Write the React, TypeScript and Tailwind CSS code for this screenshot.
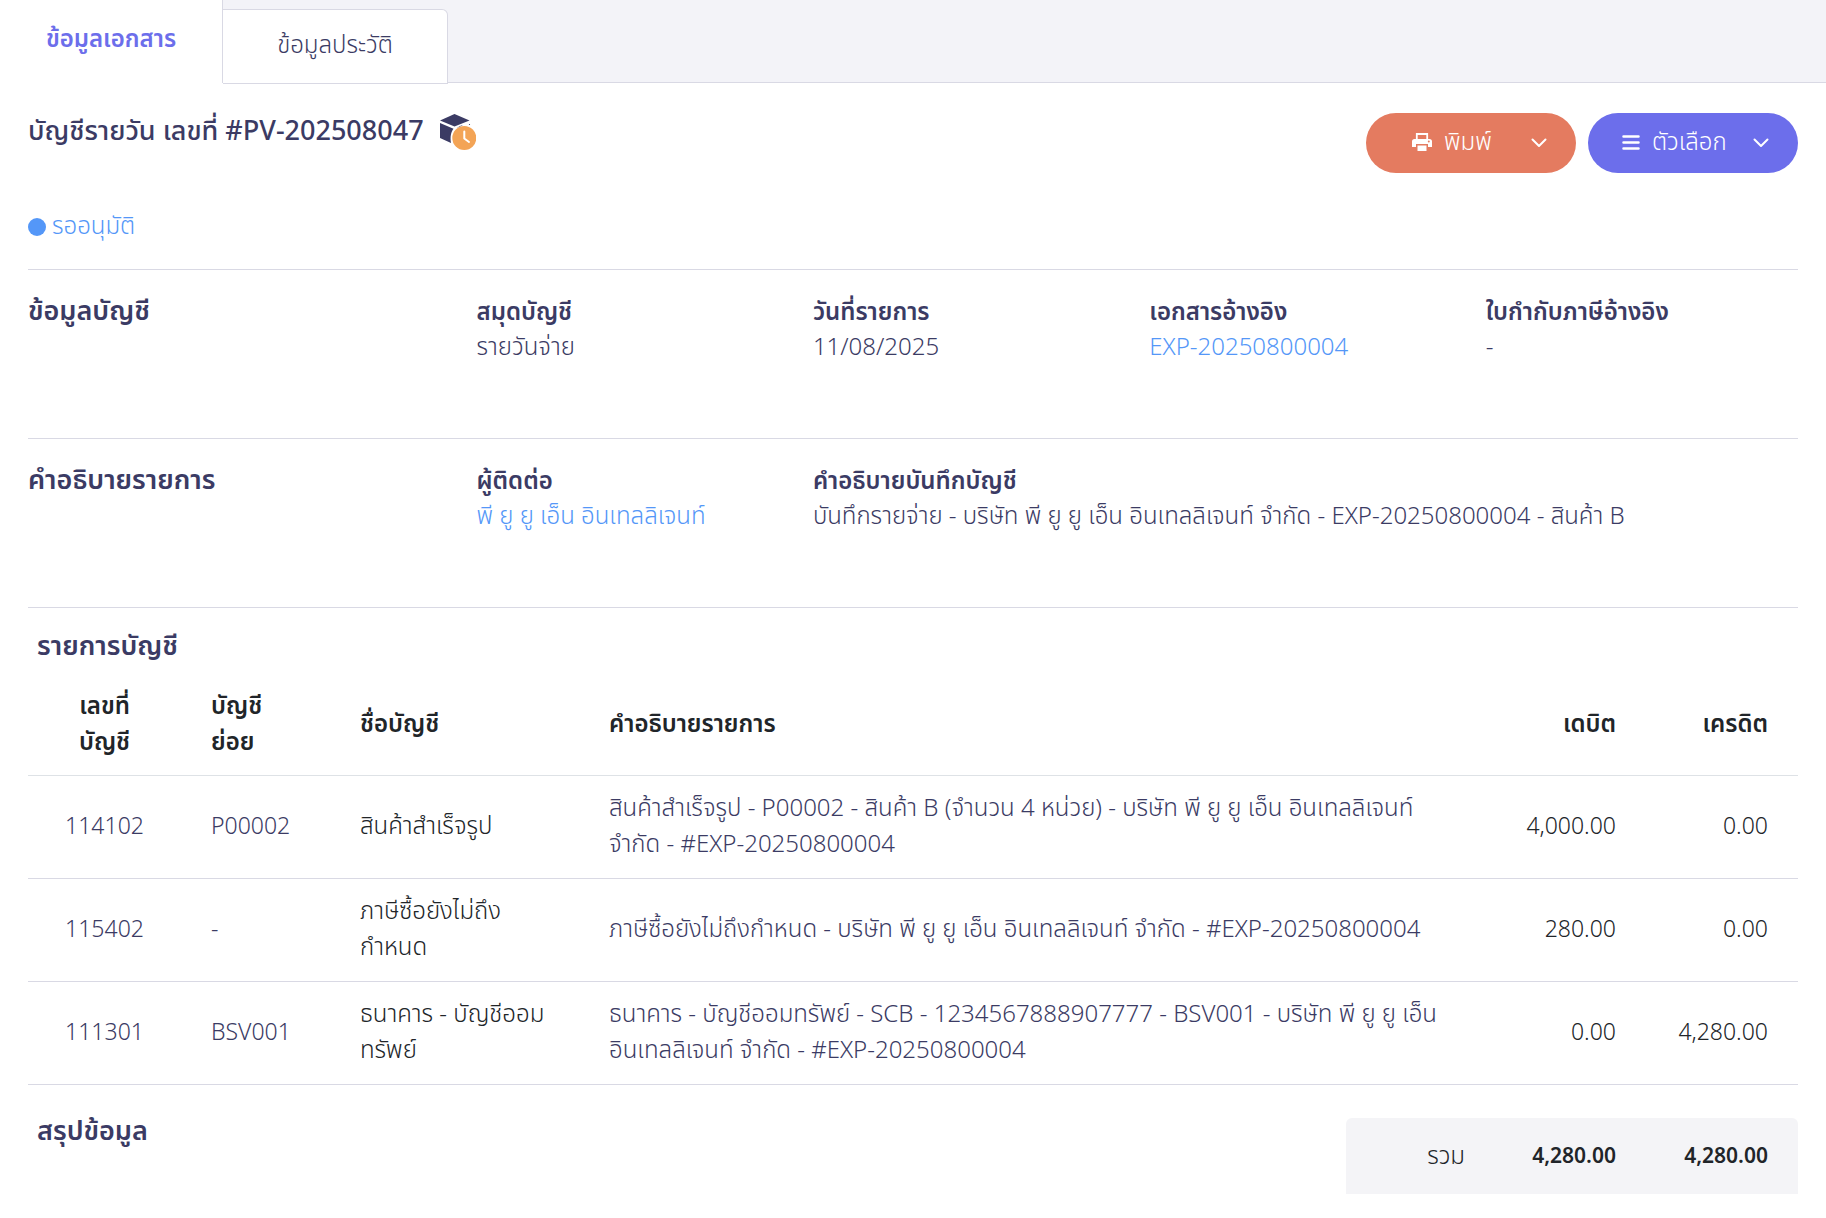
import React, { useState } from "react";

/** ================= Types ================= */
type TabKey = "document" | "history";

type Entry = {
  code: string;
  sub: string;
  name: string[];
  description: string[];
  debit: string;
  credit: string;
};

/** ================= Data ================= */
const TABS: { key: TabKey; label: string }[] = [
  { key: "document", label: "ข้อมูลเอกสาร" },
  { key: "history", label: "ข้อมูลประวัติ" },
];

const ENTRIES: Entry[] = [
  {
    code: "114102",
    sub: "P00002",
    name: ["สินค้าสำเร็จรูป"],
    description: [
      "สินค้าสำเร็จรูป - P00002 - สินค้า B (จำนวน 4 หน่วย) - บริษัท พี ยู ยู เอ็น อินเทลลิเจนท์",
      "จำกัด - #EXP-20250800004",
    ],
    debit: "4,000.00",
    credit: "0.00",
  },
  {
    code: "115402",
    sub: "-",
    name: ["ภาษีซื้อยังไม่ถึง", "กำหนด"],
    description: ["ภาษีซื้อยังไม่ถึงกำหนด - บริษัท พี ยู ยู เอ็น อินเทลลิเจนท์ จำกัด - #EXP-20250800004"],
    debit: "280.00",
    credit: "0.00",
  },
  {
    code: "111301",
    sub: "BSV001",
    name: ["ธนาคาร - บัญชีออม", "ทรัพย์"],
    description: [
      "ธนาคาร - บัญชีออมทรัพย์ - SCB - 1234567888907777 - BSV001 - บริษัท พี ยู ยู เอ็น",
      "อินเทลลิเจนท์ จำกัด - #EXP-20250800004",
    ],
    debit: "0.00",
    credit: "4,280.00",
  },
];

/** ================= Small UI Bits ================= */
const Lines: React.FC<{ items: string[] }> = ({ items }) => (
  <>
    {items.map((line) => (
      <span key={line} className="block whitespace-nowrap">
        {line}
      </span>
    ))}
  </>
);

const BoxClockIcon = () => (
  <svg className="h-9 w-9 shrink-0" viewBox="0 0 36 36" fill="none" aria-hidden="true">
    <path d="M0 6.5 14.5 0 29.500 6.5 14.5 12.500Z" fill="#3b3b64" />
    <path d="M0 9 13.500 14.7C11 18 10 22.5 11 29L0 24Z" fill="#3b3b64" />
    <path d="M16.5 14.3 23 11.200C20.500 11.400 18.500 12.500 16.500 14.300Z" fill="#3b3b64" />
    <circle cx="29.500" cy="10.500" r="0.600" fill="#3b3b64" />
    <circle cx="24.300" cy="24" r="12" fill="#f3a456" />
    <path d="M24.300 17.500V24.500L29 28" stroke="#fff" strokeWidth="2" strokeLinecap="round" strokeLinejoin="round" />
  </svg>
);

const PrinterIcon = () => (
  <svg className="h-5 w-5" viewBox="0 0 20 20" fill="none" aria-hidden="true">
    <path d="M4.800 6.500V1H15.200V6.500" stroke="#fff" strokeWidth="1.800" />
    <path
      fillRule="evenodd"
      d="M2.500 6H17.500A2.500 2.500 0 0 1 20 8.500V14H16V11H4V14H0V8.500A2.500 2.500 0 0 1 2.500 6ZM16.800 7.400A1 1 0 1 0 16.800 9.400A1 1 0 0 0 16.800 7.400Z"
      fill="#fff"
    />
    <path d="M5.500 12.500H14.500V18H5.500Z" fill="#fff" />
  </svg>
);

const MenuIcon = () => (
  <svg className="h-5 w-[18px]" viewBox="0 0 18 20" fill="none" aria-hidden="true">
    <path d="M1.500 3.500H16.500M1.500 9.500H16.500M1.500 15.500H16.500" stroke="#fff" strokeWidth="2.500" strokeLinecap="round" />
  </svg>
);

const ChevronIcon = () => (
  <svg className="h-4 w-4" viewBox="0 0 16 16" fill="none" aria-hidden="true">
    <path d="M1.500 4.500 8 11 14.500 4.500" stroke="#fff" strokeWidth="2" strokeLinecap="round" strokeLinejoin="round" />
  </svg>
);

const ActionButton: React.FC<{
  icon: React.ReactNode;
  label: string;
  className: string;
}> = ({ icon, label, className }) => (
  <button
    type="button"
    aria-haspopup="menu"
    className={`flex h-[60px] w-[210px] items-center rounded-full pr-[29px] text-white ${className}`}
  >
    {icon}
    <span className="ml-3">{label}</span>
    <span className="ml-auto">
      <ChevronIcon />
    </span>
  </button>
);

const Field: React.FC<{ label: string; wide?: boolean; children: React.ReactNode }> = ({
  label,
  wide,
  children,
}) => (
  <div className={`px-3 ${wide ? "w-3/4" : "w-1/4"}`}>
    <dt className="font-semibold">{label}</dt>
    <dd className="whitespace-nowrap">{children}</dd>
  </div>
);

const InfoSection: React.FC<{ title: string; children: React.ReactNode }> = ({ title, children }) => (
  <section className="h-[169px] border-t border-[#d9d9e4] pt-[26px]">
    <div className="-mx-3 flex leading-[35px]">
      <h2 className="w-1/4 px-3 text-[27px] font-semibold leading-8">{title}</h2>
      <dl className="flex w-3/4">{children}</dl>
    </div>
  </section>
);

/** ================= Main Component ================= */
const App: React.FC = () => {
  const [active, setActive] = useState<TabKey>("document");

  return (
    <div className="min-h-screen bg-white font-['Noto_Sans_Thai','Noto_Sans',sans-serif] text-[24px] font-[350] text-[#3b3b64]">
      {/* Tabs */}
      <div role="tablist" className="flex h-[83px] items-end border-b border-[#d9d9e4] bg-[#f3f3f8]">
        {TABS.map((tab) => (
          <button
            key={tab.key}
            type="button"
            role="tab"
            aria-selected={tab.key === active}
            onClick={() => setActive(tab.key)}
            className={
              tab.key === active
                ? "-mb-px h-[84px] w-[223px] border-r border-[#d9d9e4] bg-white pb-0.5 font-semibold text-[#6c6eeb]"
                : "-mb-0.5 h-[75px] w-[225px] rounded-tr-md border-y border-r border-[#d9d9e4] bg-white pb-0.5"
            }
          >
            {tab.label}
          </button>
        ))}
      </div>

      <main className="px-7 pt-[30px]">
        {/* Header */}
        <header className="flex items-start justify-between">
          <h1 className="flex items-center gap-4 text-[27px] font-medium leading-[38px]">
            บัญชีรายวัน เลขที่ #PV-202508047
            <BoxClockIcon />
          </h1>
          <div className="flex gap-3">
            <ActionButton icon={<PrinterIcon />} label="พิมพ์" className="bg-[#e47b60] pl-[46px]" />
            <ActionButton icon={<MenuIcon />} label="ตัวเลือก" className="bg-[#6c6eeb] pl-[34px]" />
          </div>
        </header>

        {/* Status */}
        <p className="mt-9 mb-6 flex items-center gap-1.5 leading-9 text-[#5497f8]">
          <span className="h-[18px] w-[18px] rounded-full bg-[#5497f8]" />
          รออนุมัติ
        </p>

        <InfoSection title="ข้อมูลบัญชี">
          <Field label="สมุดบัญชี">รายวันจ่าย</Field>
          <Field label="วันที่รายการ">11/08/2025</Field>
          <Field label="เอกสารอ้างอิง">
            <a href="#reference" className="text-[#5497f8]">
              EXP-20250800004
            </a>
          </Field>
          <Field label="ใบกำกับภาษีอ้างอิง">-</Field>
        </InfoSection>

        <InfoSection title="คำอธิบายรายการ">
          <Field label="ผู้ติดต่อ">
            <a href="#contact" className="text-[#5497f8]">
              พี ยู ยู เอ็น อินเทลลิเจนท์
            </a>
          </Field>
          <Field label="คำอธิบายบันทึกบัญชี" wide>
            บันทึกรายจ่าย - บริษัท พี ยู ยู เอ็น อินเทลลิเจนท์ จำกัด - EXP-20250800004 - สินค้า B
          </Field>
        </InfoSection>

        {/* Entries */}
        <section className="border-t border-[#d9d9e4] pt-[21px]">
          <h2 className="px-[9px] text-[27px] font-semibold leading-9">รายการบัญชี</h2>
          <table className="mt-2.5 w-full table-fixed border-collapse text-left leading-9">
            <colgroup>
              <col className="w-[153px]" />
              <col className="w-[149px]" />
              <col className="w-[249px]" />
              <col />
              <col className="w-[160px]" />
              <col className="w-[152px]" />
            </colgroup>
            <thead>
              <tr className="h-[100px] border-b border-[#dee2e6] text-[#212529] *:font-semibold">
                <th scope="col" className="text-center">
                  <Lines items={["เลขที่", "บัญชี"]} />
                </th>
                <th scope="col" className="pl-[30px]">
                  <Lines items={["บัญชี", "ย่อย"]} />
                </th>
                <th scope="col" className="pl-[30px]">ชื่อบัญชี</th>
                <th scope="col" className="pl-[30px]">คำอธิบายรายการ</th>
                <th scope="col" className="pr-[30px] text-right">เดบิต</th>
                <th scope="col" className="pr-[30px] text-right">เครดิต</th>
              </tr>
            </thead>
            <tbody>
              {ENTRIES.map((e) => (
                <tr key={e.code} className="h-[103px] border-b border-[#d9d9e4]">
                  <td className="text-center text-[23px]">{e.code}</td>
                  <td className="pl-[30px] text-[23px]">{e.sub}</td>
                  <td className="pl-[30px] text-[#212529]">
                    <Lines items={e.name} />
                  </td>
                  <td className="pl-[30px]">
                    <Lines items={e.description} />
                  </td>
                  <td className="pr-[30px] text-right text-[23px] text-[#212529]">{e.debit}</td>
                  <td className="pr-[30px] text-right text-[23px] text-[#212529]">{e.credit}</td>
                </tr>
              ))}
            </tbody>
          </table>
        </section>

        {/* Summary */}
        <section className="flex items-start justify-between pt-[33px] pb-6">
          <h2 className="-mt-1 px-[9px] text-[27px] font-semibold leading-9">สรุปข้อมูล</h2>
          <dl className="flex h-[76px] w-[452px] items-center justify-end rounded-t-md bg-[#f4f4f7] pt-0.5 pr-[30px] text-right text-[#212529]">
            <dt>รวม</dt>
            <dd className="w-[151px] text-[21px] font-semibold">4,280.00</dd>
            <dd className="w-[152px] text-[21px] font-semibold">4,280.00</dd>
          </dl>
        </section>
      </main>
    </div>
  );
};

export default App;
